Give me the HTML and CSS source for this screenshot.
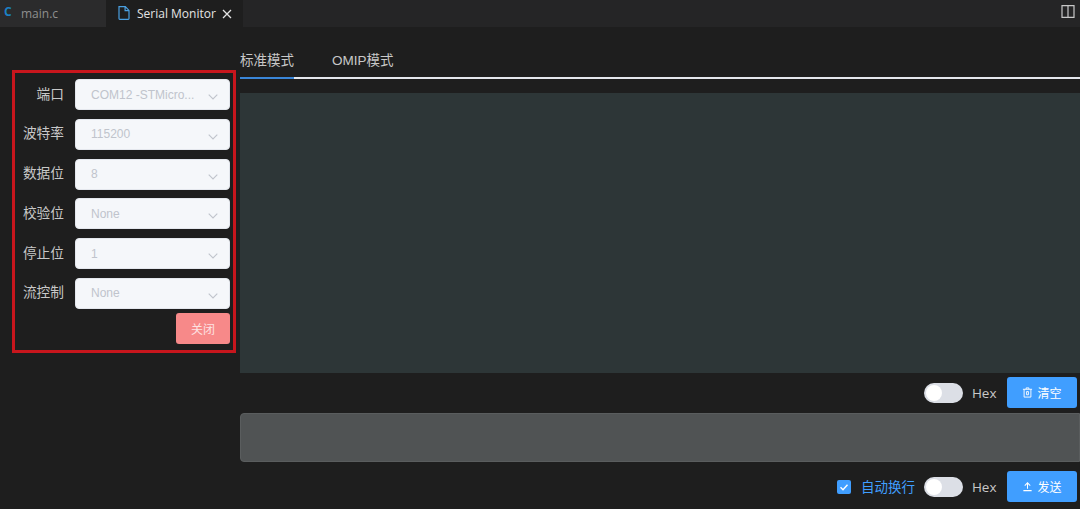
FILE: index.html
```html
<!DOCTYPE html>
<html lang="zh">
<head>
<meta charset="utf-8">
<title>Serial Monitor</title>
<link rel="stylesheet" href="styles.css">
</head>
<body>
<header class="tabbar">
  <div class="tab tab-file"><span class="c-icon">C</span><span>main.c</span></div>
  <div class="tab tab-active">
    <svg class="file-icon" viewBox="0 0 12 14" width="12" height="14"><path d="M1 .7h6.300L11 4.400V12.500a.8.8 0 0 1-.8.8H1.800a.8.8 0 0 1-.8-.8zM7.100.7V4.600H11" fill="none" stroke="#4a9fe0" stroke-width="1.200"/></svg>
    <span>Serial Monitor</span>
    <svg class="close-icon" viewBox="0 0 10 10" width="10" height="10"><path d="M1 1l8 8M9 1l-8 8" stroke="#e4e4e4" stroke-width="1.300" fill="none"/></svg>
  </div>
  <svg class="split-icon" viewBox="0 0 14 13" width="14" height="13"><path d="M1 .7h12v11.600H1zM7 .7v11.600" fill="none" stroke="#c8c8c8" stroke-width="1.200"/></svg>
</header>
<main class="layout">
  <aside class="panel">
    <div class="row"><label>端口</label><div class="select"><span>COM12 -STMicro...</span><svg class="chev" viewBox="0 0 10 6" width="10" height="6"><path d="M.7.700L5 5l4.300-4.300" fill="none" stroke="#c0c4cc" stroke-width="1.100"/></svg></div></div>
    <div class="row"><label>波特率</label><div class="select"><span>115200</span><svg class="chev" viewBox="0 0 10 6" width="10" height="6"><path d="M.7.700L5 5l4.300-4.300" fill="none" stroke="#c0c4cc" stroke-width="1.100"/></svg></div></div>
    <div class="row"><label>数据位</label><div class="select"><span>8</span><svg class="chev" viewBox="0 0 10 6" width="10" height="6"><path d="M.7.700L5 5l4.300-4.300" fill="none" stroke="#c0c4cc" stroke-width="1.100"/></svg></div></div>
    <div class="row"><label>校验位</label><div class="select"><span>None</span><svg class="chev" viewBox="0 0 10 6" width="10" height="6"><path d="M.7.700L5 5l4.300-4.300" fill="none" stroke="#c0c4cc" stroke-width="1.100"/></svg></div></div>
    <div class="row"><label>停止位</label><div class="select"><span>1</span><svg class="chev" viewBox="0 0 10 6" width="10" height="6"><path d="M.7.700L5 5l4.300-4.300" fill="none" stroke="#c0c4cc" stroke-width="1.100"/></svg></div></div>
    <div class="row"><label>流控制</label><div class="select"><span>None</span><svg class="chev" viewBox="0 0 10 6" width="10" height="6"><path d="M.7.700L5 5l4.300-4.300" fill="none" stroke="#c0c4cc" stroke-width="1.100"/></svg></div></div>
    <div class="close-row"><button class="btn-close">关闭</button></div>
  </aside>
  <section class="content">
    <nav class="modes"><span class="mode mode-active">标准模式</span><span class="mode">OMIP模式</span></nav>
    <div class="terminal"></div>
    <div class="controls controls-top">
      <span class="switch"><i></i></span><span class="hex">Hex</span>
      <button class="btn-primary"><svg viewBox="0 0 12 12" width="11" height="11"><path d="M1 2.500h10M4.500 2.500V1h3v1.500M2.300 2.500V11h7.400V2.500M5 5v3.500h2V5z" fill="none" stroke="#fff" stroke-width="1"/></svg>清空</button>
    </div>
    <div class="input-box"></div>
    <div class="controls controls-bottom">
      <span class="checkbox"><svg viewBox="0 0 14 14" width="14" height="14"><path d="M3.500 7.200l2.500 2.500 4.500-5" fill="none" stroke="#fff" stroke-width="1.400"/></svg></span>
      <span class="wrap-label">自动换行</span>
      <span class="switch"><i></i></span><span class="hex">Hex</span>
      <button class="btn-primary"><svg viewBox="0 0 12 12" width="11" height="11"><path d="M1.500 10.500h9M6 8.500V2.500M3 5l3-3 3 3" fill="none" stroke="#fff" stroke-width="1.100"/></svg>发送</button>
    </div>
  </section>
</main>
</body>
</html>
```
FILE: styles.css
```css
* { box-sizing: border-box; }
html, body { margin: 0; height: 100%; }
body {
  width: 1080px;
  height: 509px;
  overflow: hidden;
  background: #1e1e1e;
  color: #ccc;
  font-family: "Liberation Sans", "Noto Sans CJK SC", sans-serif;
  font-size: 13px;
}
.tabbar {
  height: 27px;
  background: #252526;
  display: flex;
  align-items: stretch;
  position: relative;
}
.tab {
  display: flex;
  align-items: center;
  font-family: "Open Sans", "Noto Sans", sans-serif;
  font-size: 12px;
}
.tab-file {
  width: 106px;
  background: #2b2b2c;
  color: #8f8f8f;
  padding-left: 4px;
}
.c-icon { color: #1b81c4; font-weight: 700; font-size: 12px; width: 17px; margin-top: -5px; }
.tab-active {
  width: 137px;
  background: #1e1e1e;
  color: #e4e4e4;
  padding-left: 12px;
}
.file-icon { margin-right: 7px; margin-top: -2px; }
.close-icon { margin-left: 6px; }
.split-icon { position: absolute; right: 5px; top: 5px; }
.layout { display: flex; height: 482px; }
.panel {
  margin: 43px 4px 0 12px;
  width: 224px;
  height: 283px;
  border: 3px solid #c8161d;
  padding: 6px 3px 0 0;
  flex: none;
}
.row {
  display: flex;
  align-items: center;
  height: 31px;
  margin-bottom: 8.750px;
}
.row label {
  width: 49px;
  text-align: right;
  margin-right: 11px;
  margin-top: -4px;
  color: #c8c8c8;
  font-size: 13.700px;
  white-space: nowrap;
}
.select {
  width: 155px;
  height: 31px;
  background: #f5f7fa;
  border-radius: 4px;
  border: 1px solid #e4e7ed;
  padding: 0 11px 0 15px;
  display: flex;
  align-items: center;
  justify-content: space-between;
  color: #c0c4cc;
  font-size: 12px;
}
.chev { margin-top: 5px; }
.close-row { display: flex; justify-content: flex-end; margin-top: -5px; }
.btn-close {
  width: 54px;
  height: 31px;
  border: 0;
  border-radius: 3px;
  background: #f78989;
  color: #fde2e2;
  font: inherit;
  font-size: 12px;
  padding: 0;
}
.content { flex: 1; min-width: 0; display: flex; flex-direction: column; }
.modes {
  margin-top: 22px;
  height: 30px;
  border-bottom: 2px solid #e4e7ed;
  display: flex;
  gap: 38px;
  color: #c8c8c8;
  font-size: 13.500px;
  line-height: 23px;
}
.mode { height: 30px; white-space: nowrap; }
.mode-active { border-bottom: 2px solid #3a86d8; width: 54px; }
.terminal { margin-top: 14px; height: 280px; background: #2d3637; flex: none; }
.controls { display: flex; align-items: center; justify-content: flex-end; height: 31px; padding-right: 3px; }
.controls-top { margin-top: 4px; }
.controls-bottom { margin-top: 9px; }
.input-box { margin-top: 5px; height: 49px; background: #505354; border-radius: 4px 0 0 4px; flex: none; border: 1px solid #5a5d5e; }
.switch {
  width: 39px;
  height: 20px;
  border-radius: 10px;
  background: #dcdfe6;
  display: block;
  padding: 2px;
}
.switch i { display: block; width: 16px; height: 16px; border-radius: 50%; background: #fff; }
.hex { margin: 0 10.500px 0 9px; color: #c8c8c8; font-size: 13.500px; font-family: "Open Sans", sans-serif; }
.btn-primary {
  width: 70px;
  height: 31px;
  border: 0;
  border-radius: 3px;
  background: #409eff;
  color: #fff;
  font: inherit;
  font-size: 12px;
  padding: 0;
  display: flex;
  align-items: center;
  justify-content: center;
  gap: 4px;
}
.checkbox {
  width: 14px;
  height: 14px;
  background: #409eff;
  border-radius: 2px;
  display: block;
  margin-right: 10px;
}
.checkbox svg { display: block; }
.wrap-label { color: #409eff; font-size: 13.500px; margin-right: 9px; margin-top: -2px; white-space: nowrap; }
```
